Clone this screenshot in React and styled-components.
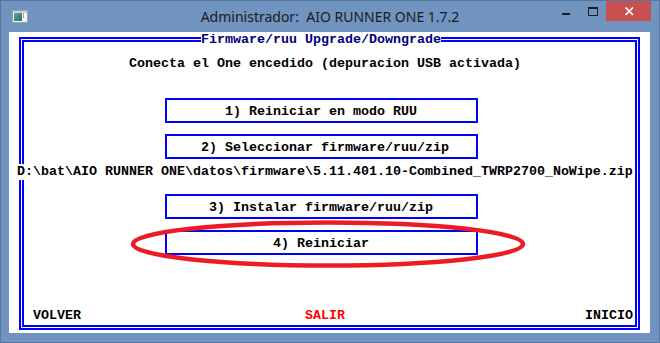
import React from 'react';
import styled, { createGlobalStyle } from 'styled-components';

const Global = createGlobalStyle`
  html, body { margin: 0; padding: 0; background: #fff; }
  body { width: 660px; height: 343px; overflow: hidden; }
`;

const Window = styled.div`
  width: 660px;
  height: 343px;
  box-sizing: border-box;
  background: #7093bf;
  border: 1px solid #56769f;
  display: flex;
  flex-direction: column;
`;

const TitleBar = styled.div`
  height: 31px;
  flex: none;
  display: grid;
  grid-template-columns: 1fr auto 1fr;
  align-items: center;
`;

const AppIcon = styled.div`
  padding-left: 11px;
  display: flex;
  align-items: center;
  height: 31px;
`;

const Title = styled.div`
  font-family: "Noto Sans", "Open Sans", sans-serif;
  font-size: 14px;
  color: #1c1c1c;
  white-space: pre;
  line-height: 31px;
`;

const Controls = styled.div`
  justify-self: end;
  align-self: start;
  display: flex;
  margin-right: 8px;
`;

const CtrlButton = styled.div`
  width: ${p => p.$w}px;
  height: 20px;
  background: ${p => p.$bg || 'transparent'};
  display: flex;
  svg { display: block; }
`;

const Client = styled.div`
  position: relative;
  margin: 0 9px 0 8px;
  height: 301px;
  background: #fff;
  display: grid;
  grid-template-columns: repeat(80, 8px);
  grid-template-rows: repeat(25, 12px);
`;

const Text = styled.span`
  grid-row: ${p => p.$row + 1};
  grid-column: ${p => p.$col + 1} / span ${p => p.$len};
  align-self: start;
  font-family: "Liberation Mono", "DejaVu Sans Mono", monospace;
  font-weight: bold;
  font-size: 13.33px;
  line-height: 16px;
  white-space: pre;
  color: ${p => p.$color || '#000'};
  background: ${p => (p.$bg ? '#fff' : 'transparent')};
  z-index: 1;
`;

const DoubleFrame = styled.div`
  grid-area: 1 / 1 / 26 / 81;
  align-self: start;
  justify-self: start;
  margin: 5px 0 0 10px;
  width: 621px;
  height: 293px;
  box-sizing: border-box;
  border: 2px solid #0000ff;
  padding: 1px;
`;

const InnerFrame = styled.div`
  height: 100%;
  box-sizing: border-box;
  border: 2px solid #0000ff;
`;

const MenuBox = styled.div`
  grid-row: ${p => p.$row + 1} / span 3;
  grid-column: 20 / span 40;
  align-self: start;
  justify-self: start;
  margin: 6px 0 0 4px;
  width: 313px;
  height: 25px;
  box-sizing: border-box;
  border: 2px solid #0000ff;
`;

const MenuLabel = styled.div`
  margin-top: 4px;
  padding-left: ${p => (p.$col - 19) * 8 - 6}px;
  font-family: "Liberation Mono", "DejaVu Sans Mono", monospace;
  font-weight: bold;
  font-size: 13.33px;
  line-height: 16px;
  white-space: pre;
  color: #000;
`;

const Highlight = styled.svg`
  position: absolute;
  left: 0;
  top: 0;
  pointer-events: none;
  z-index: 2;
`;

const menu = [
  { row: 5, col: 27, label: '1) Reiniciar en modo RUU' },
  { row: 8, col: 24, label: '2) Seleccionar firmware/ruu/zip' },
  { row: 13, col: 25, label: '3) Instalar firmware/ruu/zip' },
  { row: 16, col: 33, label: '4) Reiniciar' },
];

const path = 'D:\\bat\\AIO RUNNER ONE\\datos\\firmware\\5.11.401.10-Combined_TWRP2700_NoWipe.zip';

export default function App() {
  return (
    <>
      <Global />
      <Window>
        <TitleBar>
          <AppIcon>
            <svg width="16" height="13" viewBox="0 0 16 13">
              <defs>
                <linearGradient id="ig" x1="0" y1="0" x2="1" y2="1">
                  <stop offset="0" stopColor="#5fa3c9" />
                  <stop offset="0.5" stopColor="#3f8d6a" />
                  <stop offset="1" stopColor="#2a6d8f" />
                </linearGradient>
              </defs>
              <rect x="0.5" y="0.5" width="15" height="12" fill="#f2f2f2" stroke="#9aa3ad" />
              <rect x="1" y="1" width="14" height="2" fill="#c9d3dd" />
              <rect x="2" y="3" width="8" height="8" fill="url(#ig)" />
              <rect x="11" y="3" width="1" height="5" fill="#7fb0c9" />
            </svg>
          </AppIcon>
          <Title>{'Administrador:  AIO RUNNER ONE 1.7.2'}</Title>
          <Controls>
            <CtrlButton $w={26}>
              <svg width="26" height="20">
                <rect x="8" y="12" width="8" height="2" fill="#1e1e1e" />
              </svg>
            </CtrlButton>
            <CtrlButton $w={26}>
              <svg width="26" height="20">
                <rect x="8.5" y="7.5" width="9" height="7" fill="none" stroke="#1e1e1e" />
                <rect x="8" y="6" width="10" height="2" fill="#1e1e1e" />
              </svg>
            </CtrlButton>
            <CtrlButton $w={45} $bg="#c75050">
              <svg width="45" height="20">
                <path d="M19.5 6.5 L27 14 M27 6.5 L19.5 14" stroke="#fff" strokeWidth="1.7" />
              </svg>
            </CtrlButton>
          </Controls>
        </TitleBar>
        <Client>
          <DoubleFrame>
            <InnerFrame />
          </DoubleFrame>
          <Text $row={0} $col={24} $len={30} $color="#000080" $bg>Firmware/ruu Upgrade/Downgrade</Text>
          <Text $row={2} $col={15} $len={49}>Conecta el One encedido (depuracion USB activada)</Text>
          {menu.map(m => (
            <MenuBox key={m.row} $row={m.row}>
              <MenuLabel $col={m.col}>{m.label}</MenuLabel>
            </MenuBox>
          ))}
          <Text $row={11} $col={1} $len={77} $bg>{path}</Text>
          <Text $row={23} $col={3} $len={6}>VOLVER</Text>
          <Text $row={23} $col={37} $len={5} $color="#ff0000">SALIR</Text>
          <Text $row={23} $col={72} $len={6}>INICIO</Text>
          <Highlight width="641" height="301" viewBox="0 0 641 301">
            <ellipse cx="319" cy="212" rx="195" ry="21.5" fill="none" stroke="#ed1c24" strokeWidth="4.5" />
          </Highlight>
        </Client>
      </Window>
    </>
  );
}
